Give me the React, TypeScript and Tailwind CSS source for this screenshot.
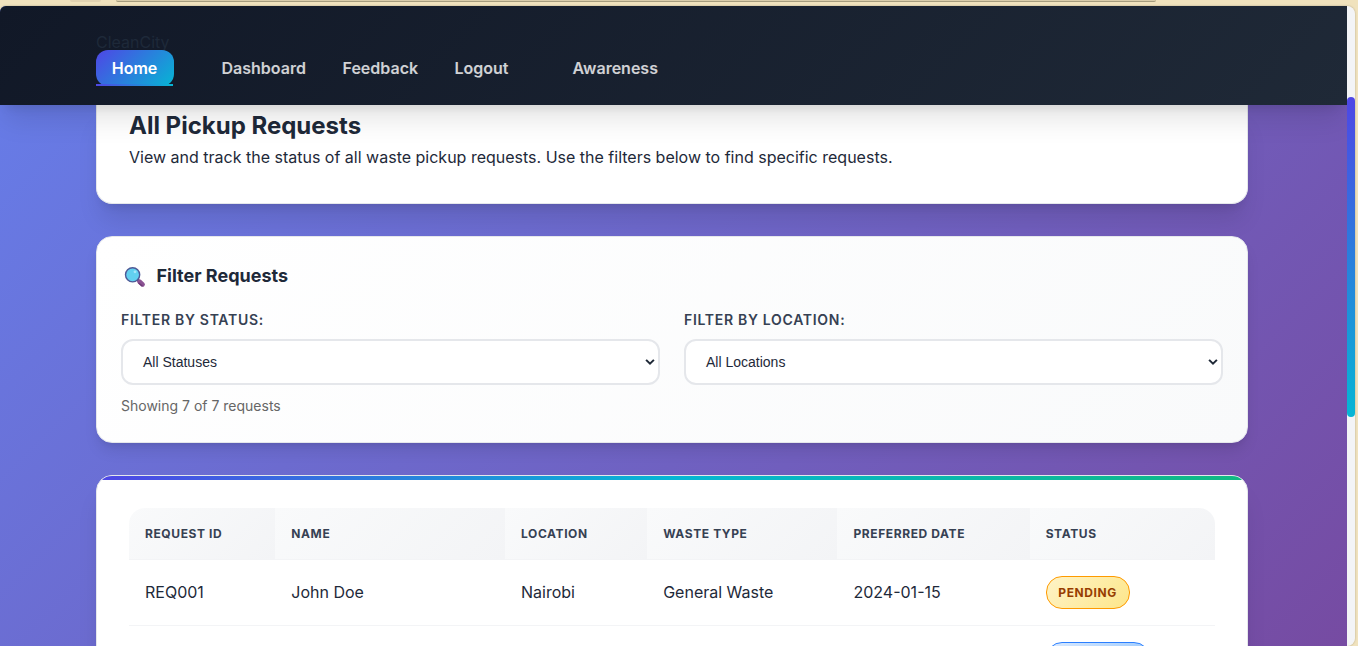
import React from "react";

const COLUMNS = "grid grid-cols-[146.3px_229.7px_142.2px_190.3px_192.2px_185.3px]";

const headers = ["Request ID", "Name", "Location", "Waste Type", "Preferred Date", "Status"];

function SearchIcon() {
  return (
    <svg width="22" height="22" viewBox="0 0 22 22" aria-hidden="true">
      <path d="M13.5 13.5 L15.5 15.5" stroke="#533566" strokeWidth="2.4" />
      <path d="M15.4 15.6 L18.6 18.4" stroke="#8b5293" strokeWidth="4.6" strokeLinecap="round" />
      <path d="M14.9 17.2 L18 19.8" stroke="#6d3b78" strokeWidth="1.4" strokeLinecap="round" />
      <circle cx="8.6" cy="8.8" r="7.1" fill="#62d0f0" stroke="#4d5a97" strokeWidth="1.4" />
      <circle cx="11" cy="5.8" r="1.4" fill="#a5e7fa" />
    </svg>
  );
}

function Chevron() {
  return (
    <svg width="10" height="8" viewBox="0 0 10 8" aria-hidden="true">
      <path d="M1.1 1.9 L5 5.7 L8.9 1.9" fill="none" stroke="#1f2937" strokeWidth="2" />
    </svg>
  );
}

function FilterField({ label, value }: { label: string; value: string }) {
  return (
    <div>
      <div className="h-[21px] text-sm leading-[19px] font-semibold tracking-[0.7px] text-gray-700 uppercase">
        {label}
      </div>
      <button className="mt-2 flex h-[46px] w-full items-center justify-between rounded-xl border-2 border-gray-200 bg-white pr-[3px] pl-5 font-['Liberation_Sans',Arial,sans-serif] text-sm text-gray-800">
        <span className="pb-px">{value}</span>
        <Chevron />
      </button>
    </div>
  );
}

function Header() {
  const link = "flex h-9 items-center text-base font-semibold text-white/80";
  return (
    <header className="relative z-10 h-[99px] shrink-0 bg-[linear-gradient(135deg,#111827,#1f2937)] px-24 pt-6 shadow-xl">
      <div className="h-6 text-base leading-6 text-gray-800">CleanCity</div>
      <nav className="-mt-1 flex">
        <a className="relative mr-12 flex h-9 w-[78px] items-center justify-center rounded-xl bg-[linear-gradient(135deg,#4f46e5,#06b6d4)] pr-px text-base font-semibold text-white">
          Home
          <span className="absolute bottom-0 left-0 h-0.5 w-[77px] bg-[linear-gradient(90deg,#4f46e5,#06b6d4)]" />
        </a>
        <a className={`${link} -ml-[0.5px] w-[121px]`}>Dashboard</a>
        <a className={`${link} w-28`}>Feedback</a>
        <a className={`${link} w-[118px]`}>Logout</a>
        <a className={link}>Awareness</a>
      </nav>
    </header>
  );
}

export default function App() {
  return (
    <div className="flex h-[646px] w-[1358px] flex-col overflow-hidden bg-[#f0e2bd] font-[Inter,sans-serif] text-gray-800">
      <div className="flex h-1.5 shrink-0 items-start">
        <div className="ml-[70px] h-0.5 w-[31px] rounded-b bg-[#e2d3b1]" />
        <div className="ml-[15px] h-0.5 w-[1040px] rounded-b-lg border-b border-[#a59c7e] bg-[#d9ccaa]" />
      </div>
      <div className="flex h-[640px] w-[1355px] overflow-hidden rounded-lg rounded-tl-[6px] rounded-bl-none shadow-[0_0_2px_rgba(0,0,0,0.3)]">
        <div className="flex w-[1347px] flex-col overflow-hidden bg-[linear-gradient(135deg,#667eea_0%,#764ba2_100%)]">
          <Header />
          <main className="ml-24 flex w-[1152px] flex-col gap-8">
            <section className="h-[99px] shrink-0 rounded-b-2xl border border-t-0 border-gray-200 bg-white px-8 pt-[5px] shadow-xl">
              <h1 className="text-2xl leading-8 font-bold">All Pickup Requests</h1>
              <p className="mt-[3px] text-base leading-6">
                View and track the status of all waste pickup requests. Use the filters below to find specific requests.
              </p>
            </section>

            <section className="h-[207px] shrink-0 rounded-2xl border border-gray-200 bg-[linear-gradient(135deg,#ffffff,#f9fafb)] px-6 pt-6 shadow-lg">
              <h2 className="flex h-[29px] items-center pl-[3px] text-lg font-bold">
                <span className="mt-[3px] mr-[10.5px]">
                  <SearchIcon />
                </span>
                Filter Requests
              </h2>
              <div className="mt-5 grid grid-cols-2 gap-6">
                <FilterField label="Filter by Status:" value="All Statuses" />
                <FilterField label="Filter by Location:" value="All Locations" />
              </div>
              <p className="mt-[11px] text-sm leading-5 text-[#666]">Showing 7 of 7 requests</p>
            </section>

            <section className="h-[400px] shrink-0 overflow-hidden rounded-2xl border border-gray-200 bg-white shadow-xl">
              <div className="h-1 bg-[linear-gradient(90deg,#4f46e5,#06b6d4,#10b981)]" />
              <div className="mx-8 mt-7">
                <div className={`${COLUMNS} overflow-hidden rounded-t-2xl`}>
                  {headers.map((h) => (
                    <div
                      key={h}
                      className="flex h-[52px] items-center border-b border-gray-100 bg-[linear-gradient(135deg,#f9fafb,#f3f4f6)] pl-4 text-xs font-bold tracking-[0.6px] text-gray-700 uppercase"
                    >
                      {h}
                    </div>
                  ))}
                </div>
                <div className={`${COLUMNS} h-[66px] items-center border-b border-gray-100 text-base`}>
                  <span className="pb-0.5 pl-4">REQ001</span>
                  <span className="pb-0.5 pl-4">John Doe</span>
                  <span className="pb-0.5 pl-4">Nairobi</span>
                  <span className="pb-0.5 pl-4">General Waste</span>
                  <span className="pb-0.5 pl-4">2024-01-15</span>
                  <span className="ml-4 flex h-[33px] w-[84px] items-center justify-center rounded-2xl border border-amber-500 bg-[linear-gradient(135deg,#fef3c7,#fde68a)] text-xs font-bold tracking-[0.6px] text-amber-800">
                    PENDING
                  </span>
                </div>
                <div className={`${COLUMNS} h-16 items-center`}>
                  <span className="col-start-6 ml-4 h-[33px] w-[104px] rounded-2xl border border-blue-500 bg-[linear-gradient(135deg,#dbeafe,#93c5fd)]" />
                </div>
              </div>
            </section>
          </main>
        </div>
        <div className="w-2 bg-gray-100 pt-[91px]">
          <div className="h-80 rounded bg-[linear-gradient(180deg,#4f46e5,#06b6d4)]" />
        </div>
      </div>
    </div>
  );
}
